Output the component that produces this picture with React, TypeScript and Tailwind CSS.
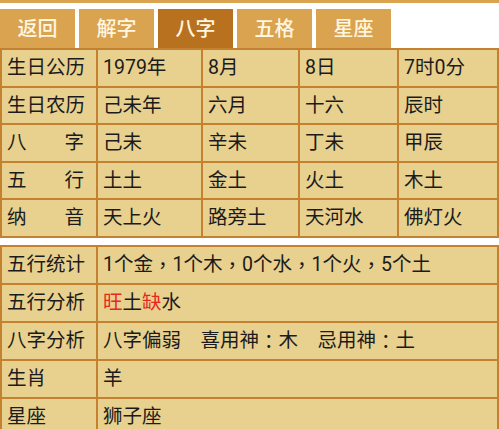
import type { ReactNode } from 'react';

const tabs = ['返回', '解字', '八字', '五格', '星座'];
const activeTab = '八字';

// punctuation rendered centred like the Android fallback font
function P({ children }: { children: ReactNode }) {
  return <span style={{ fontFamily: '"Noto Sans CJK TC", sans-serif' }}>{children}</span>;
}

function Label({ text }: { text: string }) {
  // two-char labels are spread across the four-char width
  if (text.length === 2) {
    return (
      <div className="flex w-[77px] justify-between">
        <span>{text[0]}</span>
        <span>{text[1]}</span>
      </div>
    );
  }
  return <span>{text}</span>;
}

function Cell({ children }: { children: ReactNode }) {
  return (
    <div className="flex items-center bg-[#e8d08e] pl-[5px] whitespace-nowrap overflow-hidden">
      {children}
    </div>
  );
}

const baziRows: string[][] = [
  ['生日公历', '1979年', '8月', '8日', '7时0分'],
  ['生日农历', '己未年', '六月', '十六', '辰时'],
  ['八字', '己未', '辛未', '丁未', '甲辰'],
  ['五行', '土土', '金土', '火土', '木土'],
  ['纳音', '天上火', '路旁土', '天河水', '佛灯火'],
];

export default function App() {
  return (
    <div
      className="w-[499px] h-[429px] overflow-hidden bg-white text-[19.5px] leading-none text-[#1b1b1b]"
      style={{ fontFamily: 'Roboto, "Noto Sans CJK SC", sans-serif' }}
    >
      <div className="h-[3px] bg-[#d9a350]" />
      <div className="h-[6px]" />

      {/* Tabs */}
      <div className="flex h-[39px] gap-[4px]">
        {tabs.map((t) => (
          <div
            key={t}
            className={
              'flex w-[75px] items-center justify-center text-[20px] font-medium text-[#fff6e0] ' +
              (t === activeTab ? 'bg-[#b8711f]' : 'bg-[#d9a350]')
            }
          >
            {t}
          </div>
        ))}
      </div>

      {/* 八字 table */}
      <div className="grid grid-cols-[94px_103px_95px_97px_98px] auto-rows-[35.5px] gap-[2px] bg-[#c4812f] p-[2px]">
        {baziRows.map((row) =>
          row.map((c, i) => (
            <Cell key={row[0] + i}>{i === 0 ? <Label text={c} /> : c}</Cell>
          ))
        )}
      </div>

      <div className="h-[7px]" />

      {/* 分析 table */}
      <div className="grid grid-cols-[94px_1fr] auto-rows-[36px] gap-[2px] bg-[#c4812f] p-[2px]">
        <Cell>五行统计</Cell>
        <Cell>
          1个金<P>，</P>1个木<P>，</P>0个水<P>，</P>1个火<P>，</P>5个土
        </Cell>
        <Cell>五行分析</Cell>
        <Cell>
          <span className="text-[#e8281c]">旺</span>土<span className="text-[#e8281c]">缺</span>水
        </Cell>
        <Cell>八字分析</Cell>
        <Cell>
          八字偏弱　喜用神<P>：</P>木　忌用神<P>：</P>土
        </Cell>
        <Cell>生肖</Cell>
        <Cell>羊</Cell>
        <Cell>星座</Cell>
        <Cell>狮子座</Cell>
      </div>
    </div>
  );
}
